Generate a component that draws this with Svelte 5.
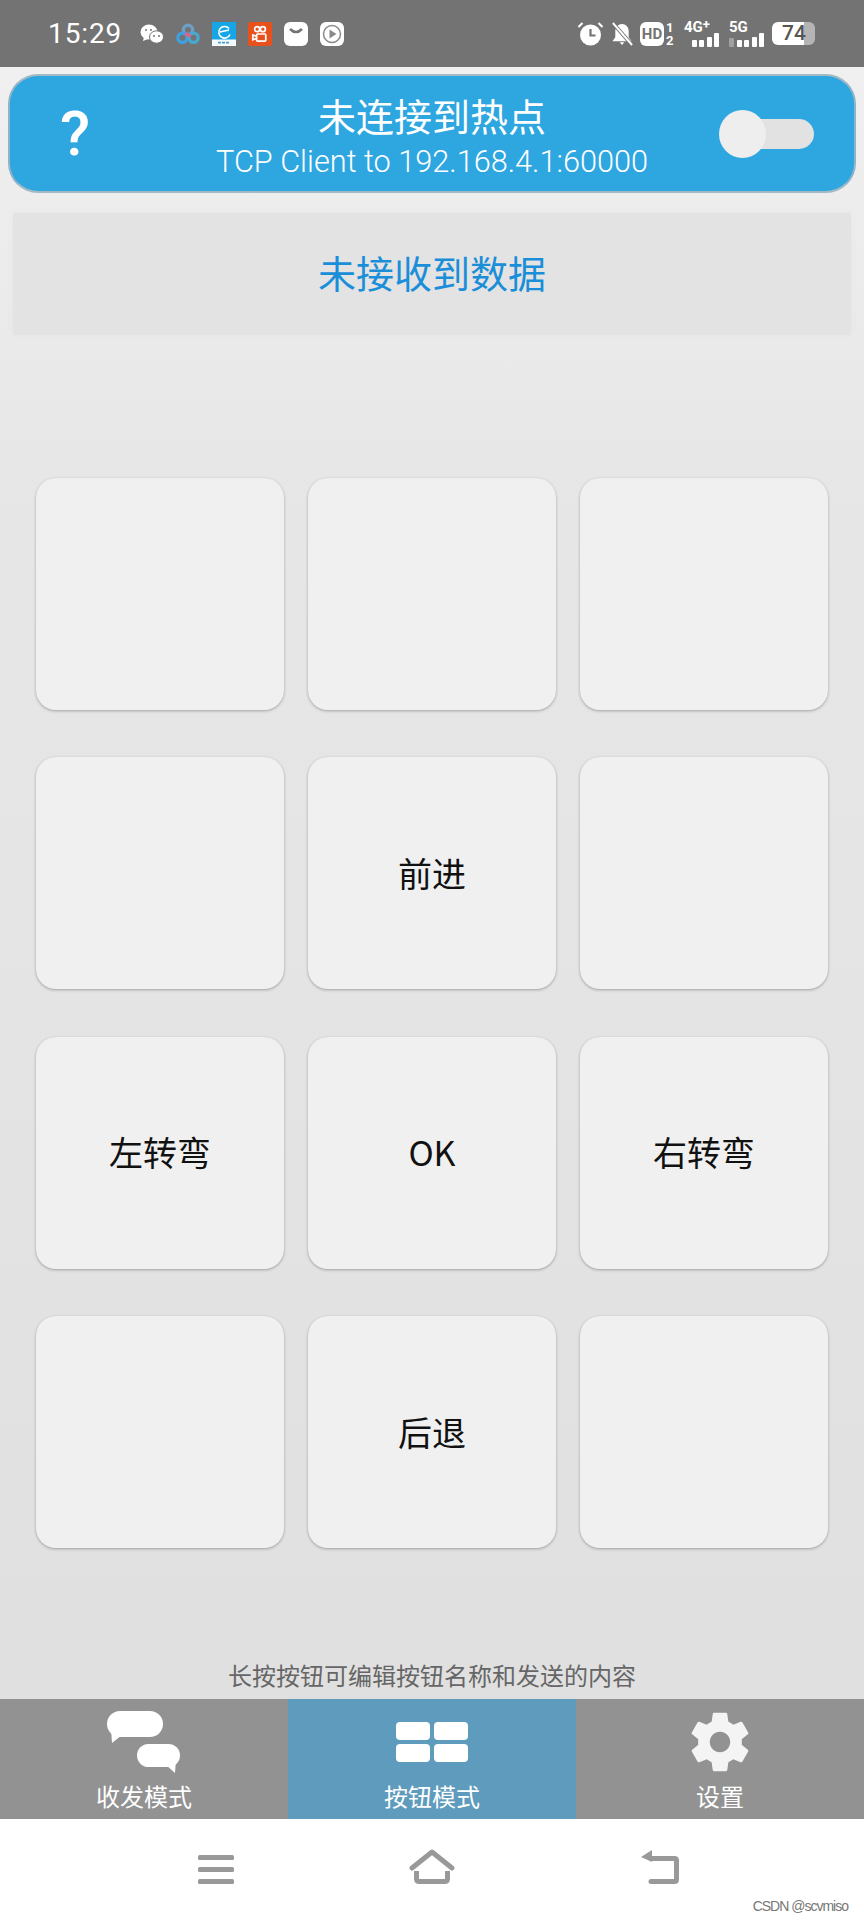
<script>
  const cells = ['', '', '', '', '前进', '', '左转弯', 'OK', '右转弯', '', '后退', ''];
</script>

<div class="page">
  <header class="status">
    <span class="time">15:29</span>
    <div class="apps">
      <svg viewBox="0 0 24 20" width="24" height="20"><ellipse cx="9" cy="8" rx="8.500" ry="7.500" fill="#fff"/><path d="M4 13l-1 4 5-2z" fill="#fff"/><ellipse cx="16.500" cy="13" rx="7" ry="6.200" fill="#fff" stroke="#737373" stroke-width="1"/><circle cx="14" cy="12" r="1" fill="#737373"/><circle cx="19" cy="12" r="1" fill="#737373"/><circle cx="6" cy="6" r="1" fill="#737373"/><circle cx="11" cy="6" r="1" fill="#737373"/></svg>
      <svg viewBox="0 0 26 24" width="24" height="24" fill="none" stroke-width="3.600"><circle cx="13" cy="7.500" r="5" stroke="#6f9fc4"/><circle cx="7" cy="16" r="5" stroke="#3fa0e0"/><circle cx="19" cy="16" r="5" stroke="#47a9cf"/><path d="M10 11.500l6 3" stroke="#e0608a"/></svg>
      <svg viewBox="0 0 24 24" width="24" height="24"><rect width="24" height="24" fill="#16a6e6"/><rect y="17.500" width="24" height="6.500" fill="#f2f8fb"/><path d="M17 6.500a5.800 5.800 0 1 0 1 6M8 10l9-2" fill="none" stroke="#fff" stroke-width="1.600"/><path d="M6 20.700h12" stroke="#4a9fc8" stroke-width="1.800" stroke-dasharray="3 1"/></svg>
      <svg viewBox="0 0 25 25" width="24" height="24"><rect width="25" height="25" rx="2" fill="#e8501c"/><g fill="none" stroke="#fff" stroke-width="1.800"><circle cx="9.500" cy="7.500" r="2.600"/><circle cx="15.500" cy="7.500" r="2.600"/><rect x="9" y="12.500" width="9.500" height="7.500" rx="1"/><path d="M9 15l-4-1.500v5l4-1.500"/></g></svg>
      <svg viewBox="0 0 24 24" width="24" height="24"><rect width="24" height="24" rx="6" fill="#fff"/><path d="M6 7q6 6 12 0" fill="none" stroke="#737373" stroke-width="2.500"/></svg>
      <svg viewBox="0 0 24 24" width="24" height="24"><rect width="24" height="24" rx="6" fill="#fff"/><circle cx="12" cy="12" r="8.500" fill="none" stroke="#8a8a8a" stroke-width="1.500"/><path d="M9.500 7.500l7 4.500-7 4.500z" fill="#8a8a8a"/></svg>
    </div>
    <div class="indicators">
      <svg viewBox="0 0 27 25" width="27" height="25"><circle cx="13.500" cy="14" r="10.500" fill="#fff"/><path d="M13.500 8v6.500h5" fill="none" stroke="#737373" stroke-width="2.200"/><path d="M1.500 6l4-4M25.500 6l-4-4" stroke="#fff" stroke-width="2"/></svg>
      <svg viewBox="0 0 23 25" width="22" height="24"><path d="M11.500 2c-5 0-7 4-7 8v6l-3 4h20l-3-4v-6c0-4-2-8-7-8zM9 21h5l-2.500 3z" fill="#fff"/><path d="M1 0l21 24" stroke="#737373" stroke-width="4"/><path d="M2 1l20 23" stroke="#fff" stroke-width="2"/></svg>
      <div class="hd"><span class="hdbox">HD</span><span class="sims"><i>1</i><i>2</i></span></div>
      <div class="net n4"><span>4G<sup>+</sup></span><div class="bars"><b class="h1"></b><b class="h2"></b><b class="h3"></b><b class="h4"></b></div></div>
      <div class="net n5"><span>5G</span><div class="bars"><b class="h0"></b><b class="h1"></b><b class="h2"></b><b class="h3"></b><b class="h4"></b></div></div>
      <div class="batt"><span>74</span></div>
    </div>
  </header>

  <main class="body">
    <section class="conn">
      <span class="q">?</span>
      <div class="conn-text">
        <div class="title">未连接到热点</div>
        <div class="sub">TCP Client to 192.168.4.1:60000</div>
      </div>
      <div class="switch"><span class="knob"></span></div>
    </section>

    <section class="data">未接收到数据</section>

    <section class="grid">
      {#each cells as c}
        <button class="cell">{c}</button>
      {/each}
    </section>

    <p class="hint">长按按钮可编辑按钮名称和发送的内容</p>
  </main>

  <nav class="tabs">
    <div class="tab">
      <svg class="i-chat" viewBox="0 0 74 62" width="74" height="62" fill="#fff"><rect x="0" y="0" width="56" height="26" rx="13"/><path d="M4 18l1 14 10-8z"/><rect x="30" y="33" width="43" height="23" rx="11.500"/><path d="M69 48l-1 14-9-8z"/></svg>
      <span>收发模式</span>
    </div>
    <div class="tab on">
      <svg class="i-grid" viewBox="0 0 72 40" width="72" height="40" fill="#fff"><rect x="0" y="0" width="34" height="18" rx="4"/><rect x="38" y="0" width="34" height="18" rx="4"/><rect x="0" y="22" width="34" height="18" rx="4"/><rect x="38" y="22" width="34" height="18" rx="4"/></svg>
      <span>按钮模式</span>
    </div>
    <div class="tab">
      <svg class="i-gear" viewBox="0 0 24 24" width="70" height="70" fill="#f4f4f4"><path fill-rule="evenodd" d="M19.430 12.980c.04-.32.070-.64.070-.98s-.03-.66-.07-.98l2.110-1.650c.19-.15.240-.42.120-.64l-2-3.460c-.12-.22-.39-.3-.61-.22l-2.490 1c-.52-.4-1.080-.73-1.690-.98l-.38-2.650A.488.488 0 0 0 14 2h-4c-.25 0-.46.18-.49.42l-.38 2.650c-.61.25-1.170.59-1.690.98l-2.490-1c-.23-.09-.49 0-.61.22l-2 3.460c-.13.22-.07.49.12.64l2.110 1.650c-.04.32-.07.65-.07.98s.03.66.07.98l-2.110 1.650c-.19.15-.24.42-.12.64l2 3.460c.12.22.39.3.61.22l2.490-1c.52.4 1.080.73 1.690.98l.38 2.650c.03.24.24.42.49.42h4c.25 0 .46-.18.49-.42l.38-2.650c.61-.25 1.170-.59 1.690-.98l2.490 1c.23.09.49 0 .61-.22l2-3.460c.12-.22.07-.49-.12-.64l-2.110-1.650zM12 15.500c-1.930 0-3.500-1.570-3.500-3.500s1.570-3.500 3.500-3.500 3.500 1.570 3.500 3.500-1.570 3.500-3.500 3.500z"/></svg>
      <span>设置</span>
    </div>
  </nav>

  <footer class="sysnav">
    <svg class="n-menu" viewBox="0 0 36 29" width="36" height="29" fill="#999"><rect width="36" height="5" rx="1.500"/><rect y="12" width="36" height="5" rx="1.500"/><rect y="24" width="36" height="5" rx="1.500"/></svg>
    <svg class="n-home" viewBox="0 0 46 35" width="46" height="35" fill="none" stroke="#999" stroke-width="5" stroke-linejoin="round" stroke-linecap="round"><path d="M3 19L23 3l20 16"/><path d="M7.500 22v7.500q0 3 3 3h25q3 0 3-3V22" stroke-linecap="butt"/></svg>
    <svg class="n-back" viewBox="0 0 38 34" width="38" height="34" fill="none" stroke="#999" stroke-width="5"><path d="M10 8.500h23.500q2 0 2 2v19q0 2-2 2H10" stroke-linecap="round"/><path d="M11 0L0 7l11 5z" fill="#999" stroke="none"/></svg>
    <span class="mark">CSDN @scvmiso</span>
  </footer>
</div>

<style>
  :global(body) { margin: 0; background: #e6e6e6; }
  .page {
    width: 864px; height: 1920px; display: flex; flex-direction: column;
    font-family: "Noto Sans CJK SC", Roboto, sans-serif;
    overflow: hidden;
  }
  .status {
    height: 67px; flex: none; background: #737373; color: #fff; display: flex; align-items: center;
    box-sizing: border-box; padding: 0 0 0 48px;
  }
  .time { font: 28px Roboto, sans-serif; width: 92px; letter-spacing: .9px; }
  .apps { display: flex; align-items: center; gap: 12px; }
  .indicators { margin-left: auto; margin-right: 49px; display: flex; align-items: center; gap: 7px; }
  .hd { display: flex; align-items: center; gap: 2px; }
  .hdbox { width: 24px; height: 24px; border-radius: 6px; background: #fff; color: #737373; font: 700 15px/24px Roboto, sans-serif; text-align: center; }
  .sims { display: flex; flex-direction: column; width: 10px; font: 700 13px/13px Roboto, sans-serif; }
  .sims i { font-style: normal; }
  .net { display: flex; flex-direction: column; align-items: flex-end; font: 700 15px/12px Roboto, sans-serif; margin-left: 1px; }
  .net.n4 { width: 35px; }
  .net.n5 { margin-left: 3px; }
  .net span { align-self: flex-start; }
  .net sup { font-size: 13px; line-height: 0; vertical-align: 3px; }
  .bars { display: flex; align-items: flex-end; gap: 2.500px; height: 14px; }
  .bars b { width: 5px; background: #fff; border-radius: 1px; }
  .bars .h0 { background: #a0a0a0; height: 9px; width: 5px; }
  .bars .h1 { height: 7px; } .bars .h2 { height: 7px; } .bars .h3 { height: 10px; } .bars .h4 { height: 14px; }
  .batt { width: 43px; height: 23px; border-radius: 6px; background: linear-gradient(90deg, #fff 74%, #b4b4b4 74%); color: #555; font: 500 21px/23px Roboto, sans-serif; margin-left: 1px; box-sizing: border-box; padding-left: 10px; }

  .body { flex: 1; display: flex; flex-direction: column; background: linear-gradient(#f0f0f0, #e7e7e7 25%, #e0e0e0); min-height: 0; }
  .conn {
    margin: 7px 8px 0; height: 119px; flex: none; box-sizing: border-box; background: #2ea6e0; border-radius: 30px;
    border: 2px solid #a4b9c6; color: #fff; display: flex; align-items: center; position: relative;
    border-left-color: #8fb4c9; border-right-color: #8fb4c9;
  }
  .q { width: 118px; padding-left: 12px; box-sizing: border-box; text-align: center; font: 500 62px/1 Roboto, sans-serif; }
  .conn-text { flex: 1; text-align: center; padding: 3px 98px 0 0; margin-left: -20px; }
  .title { font-size: 38px; line-height: 48px; }
  .sub { font: 300 30.700px/36px Roboto, sans-serif; margin-top: 5px; }
  .switch { position: absolute; right: 40px; top: 43px; width: 87px; height: 30px; background: #e2e2e2; border-radius: 15px; }
  .knob { position: absolute; left: -8px; top: -9px; width: 47px; height: 48px; border-radius: 50%; background: #eeeeee; }
  .data {
    margin: 20px 13px 0; height: 122px; flex: none; background: #e3e3e3; color: #1a8ed8; box-sizing: border-box;
    padding-bottom: 6px; box-shadow: 0 0 5px #e6e6e6;
    font-size: 38px; display: flex; align-items: center; justify-content: center;
  }
  .grid {
    margin: 143px 35px 0 36px; display: grid; grid-template-columns: repeat(3, 248px); grid-auto-rows: 232px;
    column-gap: 24px; row-gap: 47.400px;
  }
  .cell {
    border: 0; padding: 0 0 2px; background: #f0f0f0; border-radius: 20px; color: #111; font: inherit; font-size: 34px;
    box-shadow: 0 1px 3px rgba(0,0,0,.3);
  }
  .hint { margin: auto 0 9px; text-align: center; font-size: 24px; line-height: 30px; color: #666; }

  .tabs { height: 120px; flex: none; display: grid; grid-template-columns: 288px 288px 288px; background: #929292; color: #fff; }
  .tab { display: flex; flex-direction: column; align-items: center; font-size: 24px; line-height: 30px; padding-bottom: 8px; box-sizing: border-box; }
  .tab span { margin-top: auto; }
  .tab.on { background: #5e9bbc; }
  .i-chat { margin-top: 12px; }
  .i-grid { margin-top: 23px; }
  .i-gear { margin-top: 8px; }
  .sysnav { height: 101px; flex: none; background: #fff; position: relative; display: flex; align-items: flex-start; padding: 30px 0 0 198px; box-sizing: border-box; }
  .n-menu { margin: 6px 175px 0 0; }
  .n-back { margin: 1px 0 0 186px; }
  .mark { position: absolute; right: 16px; bottom: 6px; font: 14px "Liberation Sans", sans-serif; color: #777; letter-spacing: -1px; }
</style>
